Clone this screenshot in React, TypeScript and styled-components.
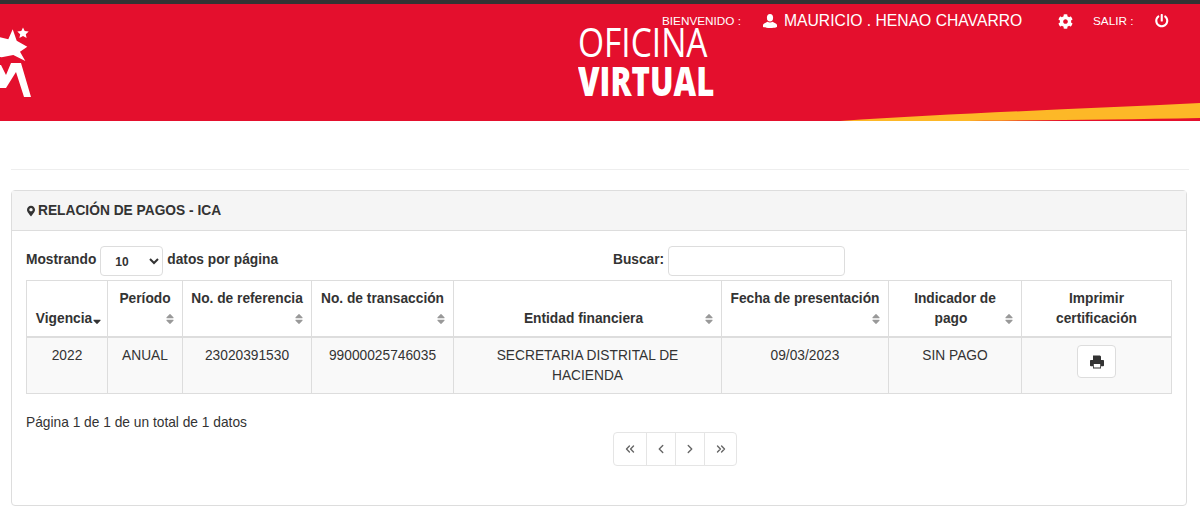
import React from "react";
import styled, { createGlobalStyle } from "styled-components";
import { FaCog, FaPowerOff, FaMapMarkerAlt, FaSort, FaSortDown } from "react-icons/fa";
import { ChevronLeft, ChevronRight, ChevronsLeft, ChevronsRight } from "lucide-react";

const Global = createGlobalStyle`
  html, body { margin: 0; padding: 0; background: #fff; }
  body {
    font-family: "Liberation Sans", Arial, sans-serif;
    font-size: 13.75px;
    line-height: 20px;
    color: #333;
  }
  * { box-sizing: border-box; }
`;

const Page = styled.div`
  width: 1200px;
  height: 518px;
  overflow: hidden;
`;

const Header = styled.header`
  position: relative;
  height: 121px;
  background: #e40f2d;
  border-top: 4px solid #333;
  display: flex;
  color: #fff;
  overflow: hidden;
`;

const LogoMark = styled.svg`
  width: 36px;
  height: 121px;
  flex: none;
  margin-top: -4px;
`;

const Brand = styled.div`
  margin-left: 542px;
  padding-top: 19px;
  display: flex;
  flex-direction: column;
  align-items: flex-start;
`;

const BrandLine = styled.div<{ $bold?: boolean }>`
  font-family: "Open Sans", "Liberation Sans", sans-serif;
  font-size: 41px;
  font-weight: ${(p) => (p.$bold ? 800 : 400)};
  line-height: 37px;
  margin-top: ${(p) => (p.$bold ? 2 : 0)}px;
  transform: scaleX(${(p) => (p.$bold ? 0.76 : 0.817)});
  transform-origin: left center;
  white-space: nowrap;
`;

const Wave = styled.svg`
  position: absolute;
  left: 0;
  bottom: 0;
  width: 100%;
  height: 25px;
`;

const UserBar = styled.div`
  position: absolute;
  top: 5px;
  left: 662px;
  display: flex;
  align-items: center;
  height: 24px;
  white-space: nowrap;
`;

const BarLabel = styled.span<{ $w: number }>`
  font-size: 11.75px;
  width: ${(p) => p.$w}px;
`;

const UserName = styled.span`
  font-size: 15.7px;
  margin-left: 7px;
  width: 274px;
`;

const BarIcon = styled.svg`
  flex: none;
  width: 14px;
  height: 14px;
`;

const GearSlot = styled.span`
  display: inline-flex;
  width: 35px;
  font-size: 15px;
`;

const PowerSlot = styled.span`
  display: inline-flex;
  font-size: 13.5px;
`;

const Divider = styled.hr`
  margin: 48px 11px 20px;
  border: 0;
  border-top: 1px solid #eee;
`;

const Panel = styled.section`
  margin: 0 13px 0 11px;
  height: 316px;
  border: 1px solid #ddd;
  border-radius: 4px;
`;

const PanelHeading = styled.div`
  height: 40px;
  padding: 0 15px;
  display: flex;
  align-items: center;
  gap: 3px;
  background: #f5f5f5;
  border-bottom: 1px solid #ddd;
  font-weight: 700;
  color: #333;
  svg { width: 8px; height: 12px; flex: none; }
`;

const PanelBody = styled.div`
  padding: 15px 14px 0;
`;

const Controls = styled.div`
  display: grid;
  grid-template-columns: 587px auto;
  height: 34px;
`;

const FieldGroup = styled.label`
  display: flex;
  align-items: flex-start;
  gap: 4px;
  font-weight: 700;
  line-height: 27px;
`;

const LengthSelect = styled.select`
  width: 63px;
  height: 30px;
  padding: 6px 10px 4px;
  font: 700 12px "Liberation Sans", Arial, sans-serif;
  color: #333;
  background: #fff;
  border: 1px solid #ddd;
  border-radius: 4px;
`;

const SearchInput = styled.input`
  width: 177px;
  height: 30px;
  border: 1px solid #ddd;
  border-radius: 4px;
  background: #fff;
`;

const Table = styled.table`
  width: 1145px;
  table-layout: fixed;
  border-collapse: collapse;
  text-align: center;
`;

const Th = styled.th<{ $active?: boolean }>`
  padding: 8px ${(p) => (p.$active ? 6 : 8)}px 7px 8px;
  vertical-align: bottom;
  text-align: center;
  font-weight: 700;
  line-height: 20px;
  border: 1px solid #ddd;
  border-bottom-width: 2px;
`;

const SortMark = styled.span<{ $active?: boolean }>`
  float: right;
  height: 20px;
  display: flex;
  align-items: center;
  color: ${(p) => (p.$active ? "#333" : "#999")};
  svg { width: 8px; height: 14px; }
`;

const Td = styled.td`
  padding: 8px 8px 7px;
  height: 55px;
  vertical-align: top;
  background: #f9f9f9;
  border: 1px solid #ddd;
`;

const PrintButton = styled.button`
  width: 39px;
  height: 33px;
  margin: -1px auto 0;
  padding: 0;
  display: flex;
  align-items: center;
  justify-content: center;
  color: #333;
  background: #fff;
  border: 1px solid #ddd;
  border-radius: 4px;
`;

const Summary = styled.div`
  margin-top: 19px;
`;

const PagerRow = styled.nav`
  margin-top: -1px;
  padding-left: 587px;
  display: flex;
`;

const PagerButton = styled.button<{ $w: number }>`
  width: ${(p) => p.$w}px;
  height: 34px;
  padding: 0;
  display: inline-flex;
  align-items: center;
  justify-content: center;
  margin-left: -1px;
  color: #666;
  background: #fff;
  border: 1px solid #e5e5e5;
  &:first-child { margin-left: 0; border-radius: 4px 0 0 4px; }
  &:last-child { border-radius: 0 4px 4px 0; }
`;

const columns: { title: string; w: number; active?: boolean; sort?: boolean }[] = [
  { title: "Vigencia", w: 81, active: true, sort: true },
  { title: "Período", w: 75, sort: true },
  { title: "No. de referencia", w: 129, sort: true },
  { title: "No. de transacción", w: 142, sort: true },
  { title: "Entidad financiera", w: 268, sort: true },
  { title: "Fecha de presentación", w: 167, sort: true },
  { title: "Indicador de pago", w: 133, sort: true },
  { title: "Imprimir certificación", w: 150 },
];

const row = ["2022", "ANUAL", "23020391530", "99000025746035", "SECRETARIA DISTRITAL DE HACIENDA", "09/03/2023", "SIN PAGO"];

const iconProps = { size: 14, strokeWidth: 2.4 };

export default function App() {
  return (
    <Page>
      <Global />
      <Header>
        <LogoMark viewBox="0 0 36 121">
          <path fill="#fff" d="M12.7 29.3L16.7 40.7 27.3 46.7 20 51.7 25.3 61 13.3 55 1.7 57.3 0 57V37.3L8.3 39.3z" />
          <path fill="#fff" d="M23 27.5l1.7 3.6 4 .5-2.9 2.6.8 3.9-3.6-2-3.6 2 .8-3.9-2.9-2.6 4-.5z" />
          <path fill="#fff" d="M0 65H1L6 75 11 63H21L31 97H24L16 72 6 88H0z" />
        </LogoMark>
        <Brand>
          <BrandLine>OFICINA</BrandLine>
          <BrandLine $bold>VIRTUAL</BrandLine>
        </Brand>
        <Wave viewBox="0 0 1200 25" preserveAspectRatio="none">
          <path fill="#fdb827" d="M840 25C950 17.5 1080 13 1200 7V22C1120 23.5 1040 24.5 950 25z" />
        </Wave>
        <UserBar>
          <BarLabel $w={101}>BIENVENIDO :</BarLabel>
          <BarIcon viewBox="0 0 14 14" fill="currentColor">
            <ellipse cx="7" cy="3.8" rx="3.1" ry="3.8" />
            <path d="M0 13V11C0 9.5 3 8.7 4.4 7.7 5.9 8.8 8.1 8.8 9.6 7.7 11 8.7 14 9.5 14 11V13C12 14.4 2 14.4 0 13z" />
          </BarIcon>
          <UserName>MAURICIO . HENAO CHAVARRO</UserName>
          <GearSlot><FaCog /></GearSlot>
          <BarLabel $w={62}>SALIR :</BarLabel>
          <PowerSlot><FaPowerOff /></PowerSlot>
        </UserBar>
      </Header>
      <Divider />
      <Panel>
        <PanelHeading>
          <FaMapMarkerAlt />
          RELACIÓN DE PAGOS - ICA
        </PanelHeading>
        <PanelBody>
          <Controls>
            <FieldGroup>
              Mostrando
              <LengthSelect defaultValue="10">
                <option>10</option>
                <option>25</option>
                <option>50</option>
              </LengthSelect>
              datos por página
            </FieldGroup>
            <FieldGroup>
              Buscar:
              <SearchInput type="search" />
            </FieldGroup>
          </Controls>
          <Table>
            <colgroup>
              {columns.map((c) => (
                <col key={c.title} style={{ width: c.w }} />
              ))}
            </colgroup>
            <thead>
              <tr>
                {columns.map((c) => (
                  <Th key={c.title} $active={c.active}>
                    {c.title}
                    {c.sort && (
                      <SortMark $active={c.active}>
                        {c.active ? <FaSortDown /> : <FaSort />}
                      </SortMark>
                    )}
                  </Th>
                ))}
              </tr>
            </thead>
            <tbody>
              <tr>
                {row.map((v) => (
                  <Td key={v}>{v}</Td>
                ))}
                <Td>
                  <PrintButton aria-label="Imprimir">
                    <BarIcon viewBox="0 0 14 14" fill="currentColor">
                      <path fillRule="evenodd" d="M3 .5H10L11 1.5V5H13C13.6 5 14 5.4 14 6V10.5C14 11 13.6 11.3 13 11.3H11V13.5H3V11.3H1C.4 11.3 0 11 0 10.5V6C0 5.4.4 5 1 5H3zM3.8 9V12.4H10.2V9z" />
                    </BarIcon>
                  </PrintButton>
                </Td>
              </tr>
            </tbody>
          </Table>
          <Summary>Página 1 de 1 de un total de 1 datos</Summary>
          <PagerRow>
            <PagerButton $w={34}><ChevronsLeft {...iconProps} /></PagerButton>
            <PagerButton $w={30}><ChevronLeft {...iconProps} /></PagerButton>
            <PagerButton $w={30}><ChevronRight {...iconProps} /></PagerButton>
            <PagerButton $w={33}><ChevronsRight {...iconProps} /></PagerButton>
          </PagerRow>
        </PanelBody>
      </Panel>
    </Page>
  );
}
